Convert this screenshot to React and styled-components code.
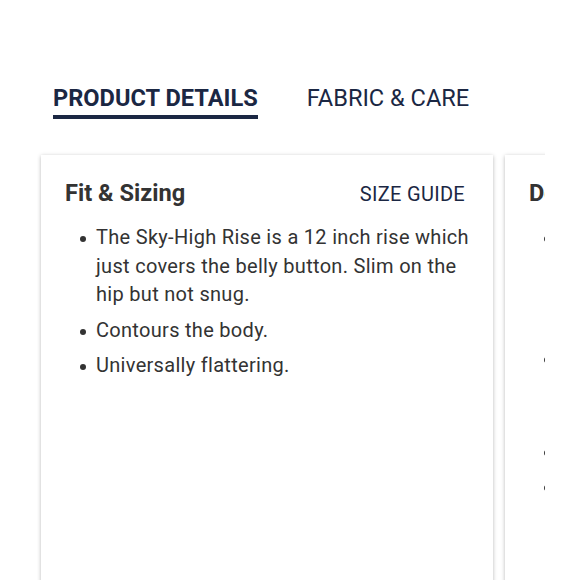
import React from "react";
import styled, { createGlobalStyle } from "styled-components";

const Global = createGlobalStyle`
  html, body { margin: 0; padding: 0; background: #fff; }
  body { font-family: Roboto, "Liberation Sans", Arial, sans-serif; }
  * { box-sizing: border-box; }
`;

const Page = styled.div`
  width: 580px;
  height: 580px;
  overflow: hidden;
  padding-top: 84px;
`;

const TabBar = styled.div`
  display: flex;
  gap: 49px;
  padding-left: 53px;
`;

const Tab = styled.button`
  border: none;
  background: none;
  padding: 0 0 3px;
  margin: 0;
  font-family: Roboto, "Liberation Sans", Arial, sans-serif;
  font-size: 23.6px;
  line-height: 28px;
  font-weight: ${(p) => (p.$active ? 700 : 400)};
  color: #1b2743;
  border-bottom: 4px solid ${(p) => (p.$active ? "#1b2743" : "transparent")};
  cursor: pointer;
`;

const Carousel = styled.div`
  margin: 32px 0 0 37px;
  width: 508px;
  overflow: hidden;
  display: flex;
  gap: 12px;
  padding: 4px;
`;

const Card = styled.section`
  flex: 0 0 452px;
  min-height: 470px;
  background: #fff;
  box-shadow: 0 1px 4px rgba(0, 0, 0, 0.28);
  padding: 24px 22px 24px 24px;
`;

const CardHeader = styled.div`
  display: flex;
  align-items: baseline;
  justify-content: space-between;
`;

const CardTitle = styled.h3`
  margin: 0;
  font-size: 23.6px;
  line-height: 28px;
  font-weight: 700;
  color: #333;
`;

const HeaderLink = styled.a`
  font-size: 20px;
  letter-spacing: 0.3px;
  color: #1b2743;
  text-decoration: none;
  padding-right: 6px;
`;

const List = styled.ul`
  margin: 16px 0 0;
  padding-left: 31px;
  list-style: none;
`;

const Item = styled.li`
  position: relative;
  font-size: 20px;
  letter-spacing: 0.3px;
  line-height: 28.5px;
  color: #333;
  & + & { margin-top: 7px; }
  &::before {
    content: "";
    position: absolute;
    left: -16px;
    top: 13px;
    width: 6px;
    height: 6px;
    border-radius: 50%;
    background: #333;
  }
`;

const cards = [
  {
    title: "Fit & Sizing",
    link: "SIZE GUIDE",
    items: [
      "The Sky-High Rise is a 12 inch rise which just covers the belly button. Slim on the hip but not snug.",
      "Contours the body.",
      "Universally flattering.",
    ],
  },
  {
    title: "Details",
    items: [
      "Crafted from our signature premium stretch denim with a soft, broken-in feel that holds its shape all day long and never bags out at the knee.",
      "Classic five-pocket styling with a zip fly and shank button closure for a clean, polished finish.",
      "Belt loops.",
      "Imported.",
    ],
  },
];

export default function App() {
  return (
    <Page>
      <Global />
      <TabBar>
        <Tab $active>PRODUCT DETAILS</Tab>
        <Tab>FABRIC &amp; CARE</Tab>
      </TabBar>
      <Carousel>
        {cards.map((c) => (
          <Card key={c.title}>
            <CardHeader>
              <CardTitle>{c.title}</CardTitle>
              {c.link && <HeaderLink href="#">{c.link}</HeaderLink>}
            </CardHeader>
            <List>
              {c.items.map((t) => (
                <Item key={t}>{t}</Item>
              ))}
            </List>
          </Card>
        ))}
      </Carousel>
    </Page>
  );
}
